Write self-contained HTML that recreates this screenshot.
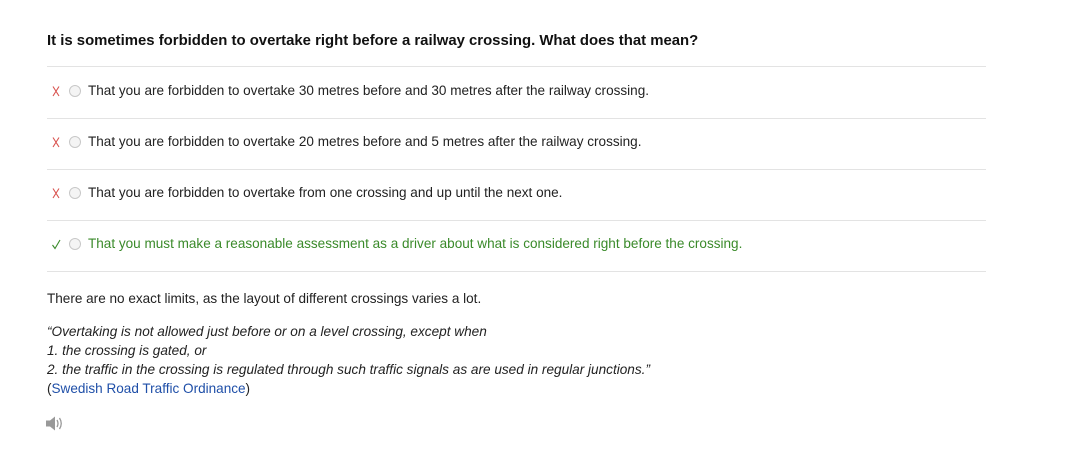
<!DOCTYPE html>
<html><head><meta charset="utf-8"><style>
body{margin:0;background:#fff;font-family:"Liberation Sans",Arial,sans-serif;color:#222;width:1066px;height:456px;overflow:hidden;position:relative}
.q{position:absolute;left:47px;top:33px;font-size:14.9px;font-weight:bold;color:#111}
.hr{position:absolute;left:47px;width:939px;height:1px;background:#e3e3e3}
.row{position:absolute;left:51px;font-size:13.55px;color:#222;display:flex;align-items:center}
.mk{width:18px;display:flex;align-items:center}
.rad{width:12px;height:12px;border:1px solid #c8c8c8;border-radius:50%;background:#f4f4f4;margin-right:7px;box-sizing:border-box}
.ok{color:#3a8a2a}
.t{position:absolute;left:47px;font-size:13.55px;color:#222}
.i{font-style:italic;font-size:13.6px;line-height:19px}
a{color:#1f4fa8;text-decoration:none}
</style></head><body>
<div class="q">It is sometimes forbidden to overtake right before a railway crossing. What does that mean?</div>
<div class="hr" style="top:66px"></div>
<div class="row" style="top:83px"><span class="mk"><svg width="10" height="12"><path d="M2 1.5L8 11M8 1.5L2 11" stroke="#d9534f" stroke-width="1.1"/></svg></span><span class="rad"></span>That you are forbidden to overtake 30 metres before and 30 metres after the railway crossing.</div>
<div class="hr" style="top:118px"></div>
<div class="row" style="top:134px"><span class="mk"><svg width="10" height="12"><path d="M2 1.5L8 11M8 1.5L2 11" stroke="#d9534f" stroke-width="1.1"/></svg></span><span class="rad"></span>That you are forbidden to overtake 20 metres before and 5 metres after the railway crossing.</div>
<div class="hr" style="top:169px"></div>
<div class="row" style="top:185px"><span class="mk"><svg width="10" height="12"><path d="M2 1.5L8 11M8 1.5L2 11" stroke="#d9534f" stroke-width="1.1"/></svg></span><span class="rad"></span>That you are forbidden to overtake from one crossing and up until the next one.</div>
<div class="hr" style="top:220px"></div>
<div class="row ok" style="top:236px"><span class="mk"><svg width="10" height="12"><path d="M1.5 7L4 10.5L9 2" stroke="#3a8a2a" stroke-width="1.1" fill="none"/></svg></span><span class="rad"></span>That you must make a reasonable assessment as a driver about what is considered right before the crossing.</div>
<div class="hr" style="top:271px"></div>
<div class="t" style="top:291px">There are no exact limits, as the layout of different crossings varies a lot.</div>
<div class="t i" style="top:322px">“Overtaking is not allowed just before or on a level crossing, except when<br>1. the crossing is gated, or<br>2. the traffic in the crossing is regulated through such traffic signals as are used in regular junctions.”</div>
<div class="t" style="top:381px">(<a>Swedish Road Traffic Ordinance</a>)</div>
<svg style="position:absolute;left:45px;top:415px" width="20" height="17" viewBox="0 0 20 17">
<path d="M1 5.5h4l5-4v14l-5-4h-4z" fill="#999"/>
<path d="M12 5q2 3.5 0 7M14.5 3q3.5 5.5 0 11" stroke="#999" stroke-width="1.3" fill="none"/>
</svg>
</body></html>
